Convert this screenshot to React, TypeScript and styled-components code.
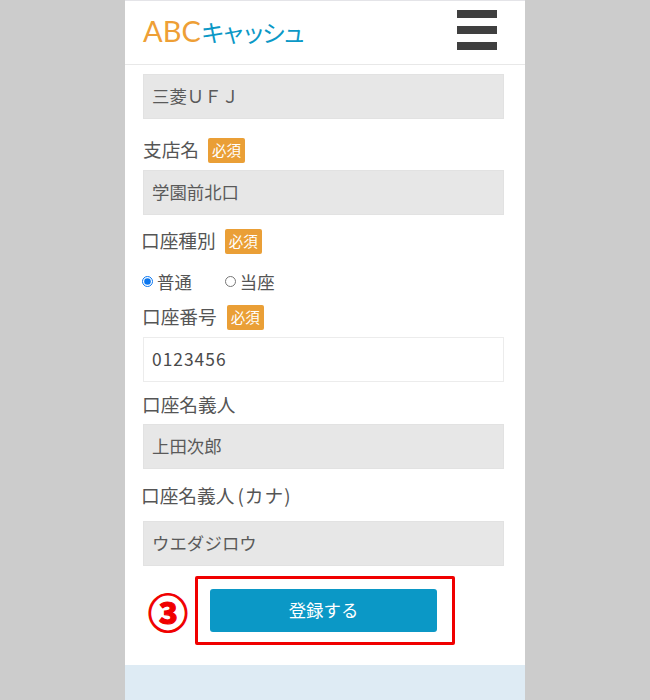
import styled, { createGlobalStyle } from "styled-components";

const GlobalStyle = createGlobalStyle`
    html, body {
        margin: 0;
        padding: 0;
        background: #cccccc;
    }
    * {
        box-sizing: border-box;
    }
`;

const Page = styled.div`
    width: 400px;
    height: 700px;
    margin: 0 auto;
    background: white;
    overflow: hidden;
    display: flex;
    flex-direction: column;
    color: #555555;
    font-family: "Noto Sans CJK JP", "Noto Sans", sans-serif;
`;

const Header = styled.header`
    height: 65px;
    flex-shrink: 0;
    display: flex;
    align-items: center;
    justify-content: space-between;
    padding: 0 28px 6px 18px;
    border-top: 1px solid #e4e4e8;
    border-bottom: 1px solid #e8e8e8;
`;

const Logo = styled.div`
    display: flex;
    align-items: baseline;
    line-height: 1;
    padding-top: 2px;
`;

const LogoAbc = styled.span`
    font-family: Lato, sans-serif;
    font-size: 29px;
    color: #ee9f36;
`;

const LogoKana = styled.span`
    font-size: 24px;
    letter-spacing: -3.6px;
    color: #0b98c6;
`;

const Burger = styled.div`
    display: flex;
    flex-direction: column;
    gap: 8px;
    width: 40px;
`;

const BurgerBar = styled.span`
    display: block;
    height: 8px;
    background: #3f3f3f;
`;

const Form = styled.main`
    flex: 1;
    display: flex;
    flex-direction: column;
    padding: 9px 21px 0 18px;
`;

const Label = styled.div<{ $top: number; $left?: number; $gap?: number }>`
    display: flex;
    align-items: center;
    gap: ${(props) => props.$gap ?? 9}px;
    height: 25px;
    padding-bottom: 2px;
    margin-top: ${(props) => props.$top}px;
    margin-left: ${(props) => props.$left ?? 0}px;
    font-size: 18.7px;
    line-height: 1;
`;

const KanaNote = styled.span`
    padding-left: 3px;
    letter-spacing: 1px;
`;

const Badge = styled.span`
    display: flex;
    align-items: center;
    justify-content: center;
    width: 37px;
    height: 25px;
    margin-top: 2px;
    background: #ea9f36;
    border-radius: 2px;
    color: white;
    font-size: 14.5px;
`;

const Field = styled.div<{ $top?: number; $editable?: boolean }>`
    display: flex;
    align-items: center;
    height: 45px;
    margin-top: ${(props) => props.$top ?? 0}px;
    padding: 0 0 3px 8px;
    font-size: 17.4px;
    color: ${(props) => (props.$editable ? "#4a4a4a" : "#5a5a5a")};
    background: ${(props) => (props.$editable ? "white" : "#e7e7e7")};
    border: 1px solid ${(props) => (props.$editable ? "#ececec" : "#e2e2e2")};
`;

const Digits = styled.span`
    letter-spacing: 1px;
`;

const RadioRow = styled.div`
    display: flex;
    align-items: center;
    gap: 33px;
    height: 24px;
    margin-top: 15px;
    margin-left: -1px;
    font-size: 17.4px;
`;

const RadioLabel = styled.label`
    display: flex;
    align-items: center;
    gap: 4px;
`;

const Radio = styled.input`
    width: 11px;
    height: 11px;
    margin: 0;
    accent-color: #0b76ef;
`;

const SubmitRow = styled.div`
    display: flex;
    align-items: center;
    gap: 7px;
    margin-top: 10px;
    margin-left: 5px;
`;

const StepMark = styled.span`
    font-size: 40px;
    font-weight: 700;
    line-height: 1;
    color: #f00000;
    -webkit-text-stroke: 1.2px #f00000;
`;

const Highlight = styled.div`
    display: flex;
    width: 260px;
    height: 69px;
    padding: 10px 0 0 12px;
    border: 3px solid #f00000;
    border-radius: 2px;
`;

const SubmitButton = styled.button`
    width: 227px;
    height: 43px;
    padding: 0 0 3px;
    border: none;
    border-radius: 3px;
    background: #0b98c6;
    color: white;
    font-family: inherit;
    font-size: 17.4px;
`;

const Footer = styled.footer`
    height: 35px;
    flex-shrink: 0;
    background: #deebf4;
`;

export default function App() {
    return (
        <>
            <GlobalStyle />
            <Page>
                <Header>
                    <Logo>
                        <LogoAbc>ABC</LogoAbc>
                        <LogoKana>キャッシュ</LogoKana>
                    </Logo>
                    <Burger>
                        <BurgerBar />
                        <BurgerBar />
                        <BurgerBar />
                    </Burger>
                </Header>
                <Form>
                    <Field>三菱ＵＦＪ</Field>
                    <Label $top={19}>
                        支店名
                        <Badge>必須</Badge>
                    </Label>
                    <Field $top={7}>学園前北口</Field>
                    <Label $top={14} $left={-2}>
                        口座種別
                        <Badge>必須</Badge>
                    </Label>
                    <RadioRow>
                        <RadioLabel>
                            <Radio type="radio" name="kind" defaultChecked />
                            普通
                        </RadioLabel>
                        <RadioLabel>
                            <Radio type="radio" name="kind" />
                            当座
                        </RadioLabel>
                    </RadioRow>
                    <Label $top={12} $left={-1} $gap={10}>
                        口座番号
                        <Badge>必須</Badge>
                    </Label>
                    <Field $top={7} $editable>
                        <Digits>0123456</Digits>
                    </Field>
                    <Label $top={11} $left={-1}>口座名義人</Label>
                    <Field $top={6}>上田次郎</Field>
                    <Label $top={15} $left={-2} $gap={0}>
                        口座名義人<KanaNote>(カナ)</KanaNote>
                    </Label>
                    <Field $top={12}>ウエダジロウ</Field>
                    <SubmitRow>
                        <StepMark>③</StepMark>
                        <Highlight>
                            <SubmitButton>登録する</SubmitButton>
                        </Highlight>
                    </SubmitRow>
                </Form>
                <Footer />
            </Page>
        </>
    );
}
